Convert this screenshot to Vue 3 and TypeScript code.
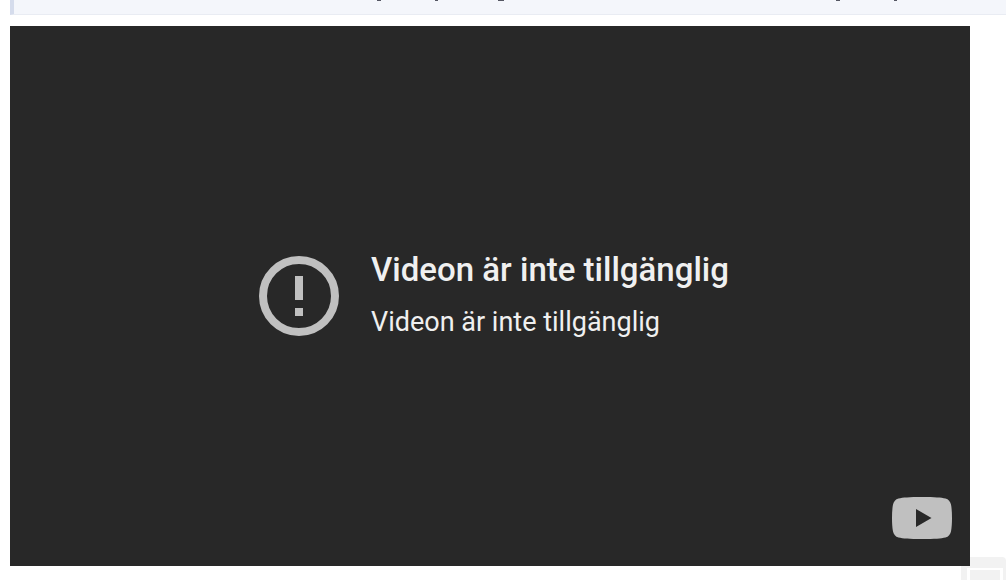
<script setup lang="ts">
const message = 'Videon är inte tillgänglig'

interface Stroke {
  x: number
  width: number
}

const descenders: Stroke[] = [
  { x: 363, width: 4 },
  { x: 421, width: 3 },
  { x: 484, width: 6 },
  { x: 822, width: 4 },
  { x: 880, width: 3 },
]
</script>

<template>
  <main class="page">
    <blockquote class="quote">
      <svg class="quote-line" height="1" aria-hidden="true">
        <rect v-for="d in descenders" :key="d.x" :x="d.x" y="0" :width="d.width" height="1" />
      </svg>
    </blockquote>

    <section class="player" aria-label="YouTube">
      <div class="notice">
        <svg class="notice-icon" viewBox="0 0 80 80" aria-hidden="true">
          <circle cx="40" cy="40" r="36" fill="none" stroke="currentColor" stroke-width="8" />
          <path d="M36 20h8v24h-8zM36 52h8v8h-8z" fill="currentColor" />
        </svg>
        <div class="notice-text">
          <h1 class="title">{{ message }}</h1>
          <p class="subtitle">{{ message }}</p>
        </div>
      </div>
      <a class="logo" href="#" aria-label="YouTube">
        <svg viewBox="0 0 60 42" aria-hidden="true">
          <path
            fill="currentColor"
            fill-rule="evenodd"
            d="M30 0C43 0 49 .5 53.500 1.500C56.500 2.300 58.300 4.500 59 7.500C59.700 11 60 16 60 21S59.700 31 59 34.500C58.300 37.500 56.500 39.700 53.500 40.500C49 41.500 43 42 30 42S11 41.500 6.500 40.500C3.500 39.700 1.700 37.500 1 34.500C.3 31 0 26 0 21S.3 11 1 7.500C1.700 4.500 3.500 2.300 6.500 1.500C11 .5 17 0 30 0ZM24 12V30L39.500 21Z"
          />
        </svg>
      </a>
    </section>

    <svg class="corner" viewBox="0 0 45 23" aria-hidden="true">
      <path fill="#f2f2f2" d="M0 23V4Q0 0 4 0H41Q45 0 45 4V23Z" />
      <path fill="#fff" d="M6 23V11H42V23Z" />
      <path fill="#f2f2f2" d="M9 23V13H39V23Z" />
    </svg>
  </main>
</template>

<style>
body {
  margin: 0;
  background: #fff;
}
</style>

<style scoped>
.page {
  position: relative;
  box-sizing: border-box;
  min-height: 100vh;
  padding: 0 0 14px 10px;
  font-family: Roboto, Arial, sans-serif;
}

.quote {
  box-sizing: border-box;
  height: 15px;
  margin: 0 0 11px;
  border-left: 4px solid #d5dcec;
  border-bottom: 1px solid #e9ecf3;
  background: #f4f6fb;
}

.quote-line {
  display: block;
  width: 100%;
  fill: #555763;
}

.player {
  position: relative;
  z-index: 1;
  display: flex;
  align-items: center;
  justify-content: center;
  max-width: 960px;
  aspect-ratio: 16 / 9;
  margin-right: 36px;
  background: #282828;
}

.notice {
  display: flex;
  align-items: center;
  gap: 32px;
  padding-left: 8px;
}

.notice-icon {
  flex: none;
  width: 80px;
  height: 80px;
  color: #c0c0c0;
}

.notice-text {
  padding-bottom: 4px;
}

.title,
.subtitle {
  margin: 0;
  color: #f0f0f0;
}

.title {
  font-size: 33px;
  font-weight: 500;
  line-height: 44px;
}

.subtitle {
  margin-top: 12px;
  font-size: 27px;
  font-weight: 400;
  line-height: 36px;
}

.logo {
  position: absolute;
  right: 18px;
  bottom: 27px;
  width: 60px;
  height: 42px;
  color: #c0c0c0;
}

.logo svg {
  display: block;
  width: 100%;
  height: 100%;
}

.corner {
  position: absolute;
  right: 0;
  bottom: 0;
  width: 45px;
  height: 23px;
}
</style>
